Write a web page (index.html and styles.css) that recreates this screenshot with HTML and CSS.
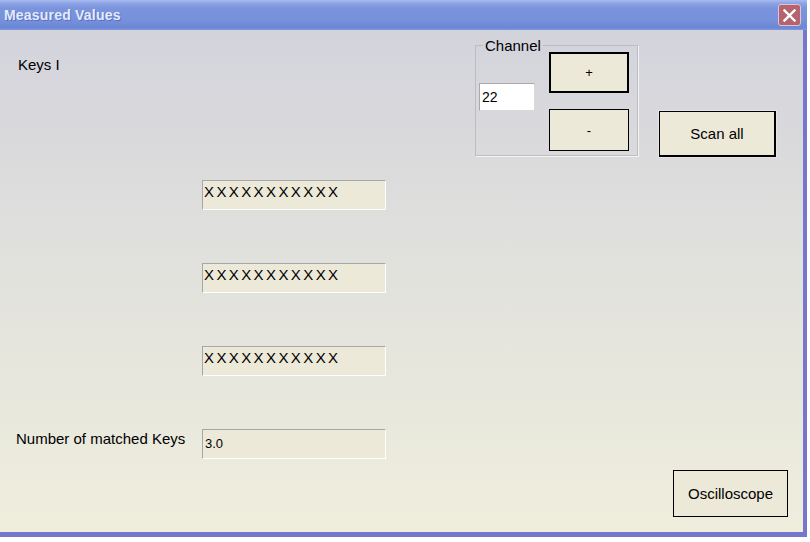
FILE: index.html
```html
<!DOCTYPE html>
<html lang="en">
<head>
  <meta charset="UTF-8" />
  <title>Measured Values</title>
  <link rel="stylesheet" href="styles.css">
</head>
<body>
  <div class="window">
    <div class="titlebar">
      <span class="title">Measured Values</span>
      <button class="close" title="Close">
        <svg width="13" height="13" viewBox="0 0 13 13">
          <path d="M1.5 1.5 L11.5 11.5 M11.5 1.5 L1.5 11.5" stroke="#fff" stroke-width="2.4" stroke-linecap="square"/>
        </svg>
      </button>
    </div>

    <div class="client">
      <div class="head">
        <div class="keys">Keys I</div>
        <fieldset class="channel">
          <legend>Channel</legend>
          <input type="text" class="chan-input" value="22"/>
          <div class="stack">
            <button class="btn default">+</button>
            <button class="btn">-</button>
          </div>
        </fieldset>
        <button class="btn scan">Scan all</button>
      </div>

      <div class="fields">
        <span></span><div class="field xx">XXXXXXXXXXX</div>
        <span></span><div class="field xx">XXXXXXXXXXX</div>
        <span></span><div class="field xx">XXXXXXXXXXX</div>
        <label class="lbl">Number of matched Keys</label><div class="field num">3.0</div>
      </div>

      <div class="foot">
        <button class="btn osc">Oscilloscope</button>
      </div>
    </div>
  </div>
</body>
</html>
```

FILE: styles.css
```css
body {
  margin: 0;
  background: #fff;
  font-family: "Liberation Sans", Arial, sans-serif;
  font-size: 15px;
  color: #000;
}
.window {
  width: 807px;
}
.titlebar {
  height: 30px;
  display: flex;
  align-items: center;
  padding-left: 4px;
  background: linear-gradient(#a9bcef 0, #8ea5e6 3px, #7b94dd 8px, #7690db 20px, #6b87d5 28px, #8399dc 30px);
}
.title {
  flex: 1;
  color: #e4ebfb;
  font-weight: bold;
  font-size: 14px;
  letter-spacing: 0.2px;
  text-shadow: 1px 1px 0 #5a72c0;
}
.close {
  width: 23px;
  height: 22px;
  margin-right: 6px;
  padding: 0;
  border: 1px solid #dcc4d0;
  border-radius: 3px;
  background: #b5636f;
  display: flex;
  align-items: center;
  justify-content: center;
}
.client {
  height: 507px;
  box-sizing: border-box;
  background: linear-gradient(#d3d3dc, #e2e2dd 50%, #efeedd);
  border-right: 4px solid #7676cd;
  border-bottom: 5px solid #7676cd;
}
.head {
  display: flex;
  align-items: flex-start;
  padding: 9px 27px 0 18px;
}
.keys {
  flex: 1;
  margin-top: 17px;
  line-height: 17px;
}
.channel {
  margin: 0;
  padding: 0 8px 4px 3px;
  border: 1px solid #bdbdbd;
  box-shadow: 1px 1px 0 #f4f4f4;
  display: flex;
  align-items: flex-start;
  gap: 14px;
  width: 163px;
  box-sizing: border-box;
}
.channel legend {
  margin-left: 4px;
  padding: 0 2px;
  line-height: 13px;
}
.chan-input {
  width: 56px;
  height: 28px;
  margin-top: 31px;
  box-sizing: border-box;
  padding: 0 2px;
  font-family: inherit;
  font-size: 14px;
  border: 1px solid #d8d8d8;
  border-top-color: #a9a9a9;
  border-left-color: #a9a9a9;
  outline: none;
}
.stack {
  display: flex;
  flex-direction: column;
  gap: 16px;
}
.btn {
  padding: 0;
  background: #ece9d8;
  border: 1px solid #000;
  font-family: inherit;
  font-size: 15px;
  color: #000;
  box-sizing: border-box;
}
.stack .btn {
  width: 80px;
  height: 41px;
  font-size: 13px;
}
.stack .btn + .btn {
  height: 42px;
}
.btn.default {
  border-width: 2px;
}
.scan {
  width: 117px;
  height: 46px;
  margin-left: 21px;
  margin-top: 72px;
  border-right-width: 2px;
  border-bottom-width: 2px;
  box-shadow: 0 0 0 1px #e4e4e4;
}
.fields {
  display: grid;
  grid-template-columns: 186px 184px;
  row-gap: 53px;
  padding-left: 16px;
  margin-top: 23px;
}
.field {
  height: 30px;
  box-sizing: border-box;
  background: #ece9d8;
  border: 1px solid #fff;
  border-top-color: #a7a7a7;
  border-left-color: #a7a7a7;
  padding: 2px 0 0 1px;
  line-height: 17px;
}
.xx {
  letter-spacing: 2.4px;
}
.num {
  font-size: 13px;
  padding: 5px 0 0 2px;
}
.lbl {
  margin-top: 1px;
  line-height: 17px;
}
.foot {
  display: flex;
  justify-content: flex-end;
  padding-right: 15px;
  margin-top: 11px;
}
.osc {
  width: 115px;
  height: 47px;
}
```
